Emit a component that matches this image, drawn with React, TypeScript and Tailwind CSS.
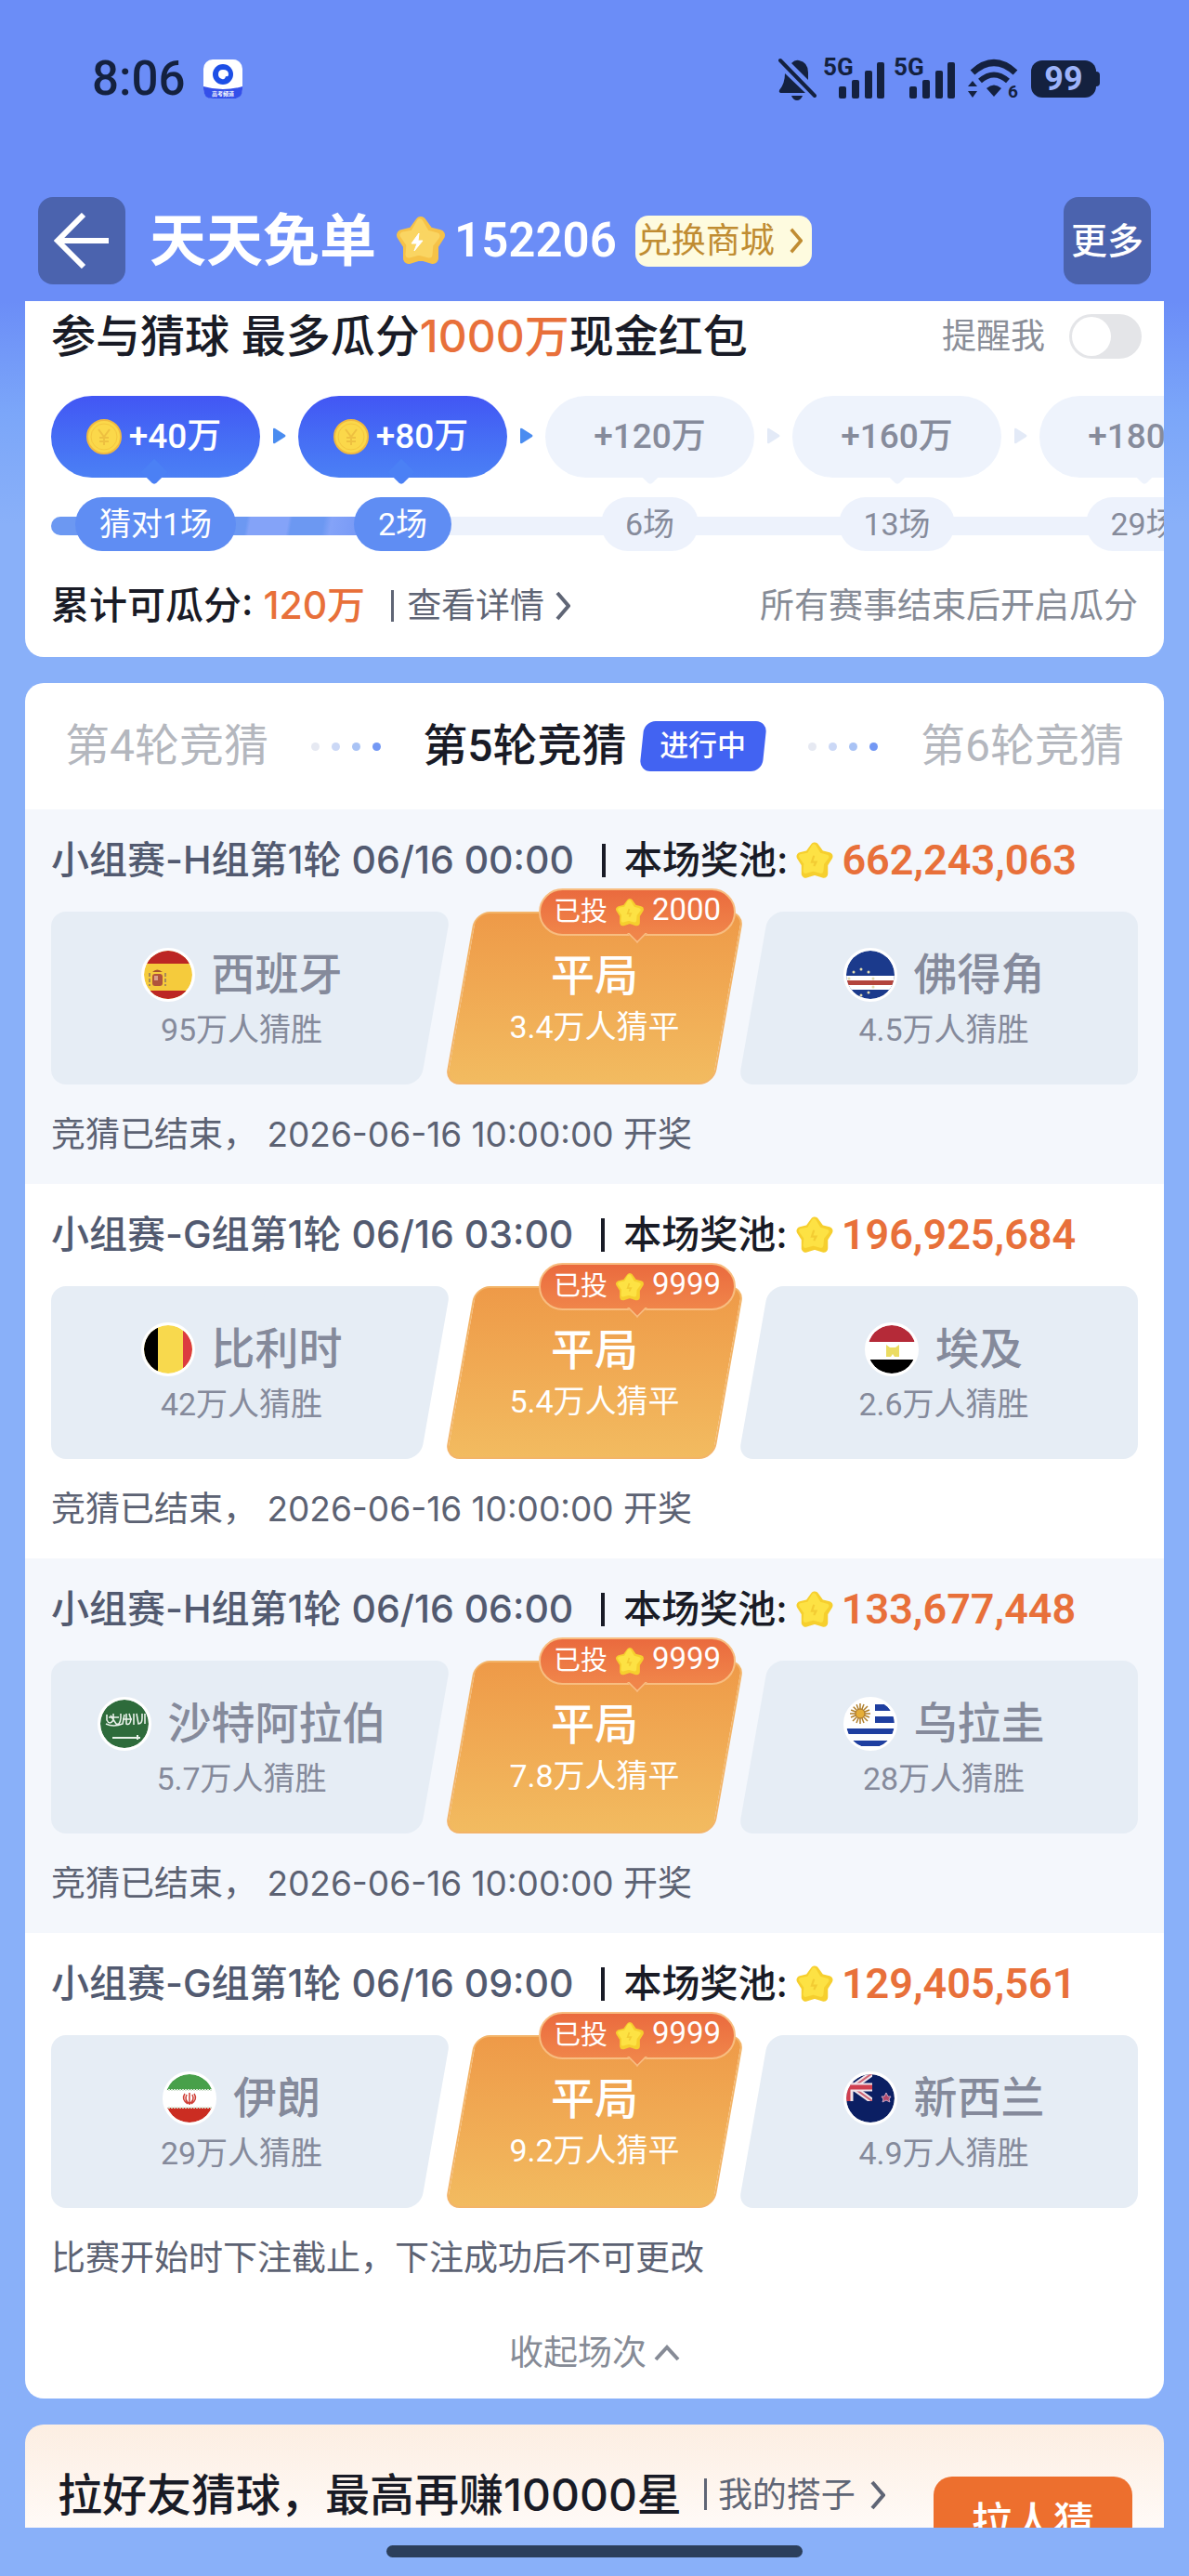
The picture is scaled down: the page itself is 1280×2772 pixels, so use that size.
import React from "react";

type Team = { name: string; votes: string; flag: React.ReactNode };

type Match = {
  title: string;
  pool: string;
  home: Team;
  away: Team;
  drawVotes: string;
  bet: string;
  note: string;
};

function Chevron({ className }: { className?: string }) {
  return (
    <svg viewBox="0 0 16 32" className={className} fill="none" stroke="currentColor" strokeWidth="4">
      <path d="M2 2 L14 16 L2 30" />
    </svg>
  );
}

function Star({ className, bolt }: { className?: string; bolt?: boolean }) {
  return (
    <svg viewBox="0 0 56 56" className={className}>
      <path
        d="M28 8 L36 19 L48 22 L41 33 L41 47 L28 43 L15 47 L15 33 L8 22 L20 19 Z"
        fill={bolt ? "#f6c247" : "#f6cf2e"}
        stroke={bolt ? "#f6c247" : "#f6cf2e"}
        strokeWidth="12"
        strokeLinejoin="round"
      />
      <path
        d="M27 8 L34 20 L45 23 L38 32 L37 43 L26 40 L15 43 L16 32 L9 22 L20 20 Z"
        fill={bolt ? "#fad562" : "#fde244"}
        stroke={bolt ? "#fad562" : "#fde244"}
        strokeWidth="7"
        strokeLinejoin="round"
      />
      {bolt ? (
        <path d="M26 20 L18 31 L24 31 L21 39 L30 28 L25 28 Z" fill="#fff" stroke="#fff" strokeLinejoin="round" />
      ) : (
        <path d="M27 21 L24 30 L30 30 L27 36" fill="none" stroke="#f3cc33" strokeWidth="3" />
      )}
    </svg>
  );
}

function Coin() {
  return (
    <svg viewBox="0 0 38 38" className="size-[38px]">
      <circle cx="19" cy="19" r="18" fill="#fbd84a" stroke="#f0b840" strokeWidth="2" />
      <circle cx="19" cy="19" r="14" fill="none" stroke="#f4c73f" />
      <path d="M13 11 L19 19 L25 11 M19 19 V28 M14 20 H24 M14 24 H24" fill="none" stroke="#eec040" strokeWidth="2" />
    </svg>
  );
}

function Flag({ children }: { children: React.ReactNode }) {
  return (
    <span className="size-[58px] shrink-0 overflow-hidden rounded-full border-[3px] border-white bg-white">
      <svg viewBox="0 0 52 52" className="size-full rounded-full">
        {children}
      </svg>
    </span>
  );
}

const spain = (
  <>
    <rect width="52" height="52" fill="#f5cb3c" />
    <rect width="52" height="14" fill="#bc2724" />
    <rect y="43" width="52" height="9" fill="#bc2724" />
    <rect x="9" y="25" width="11" height="13" rx="3" fill="#b0543c" />
    <rect x="11" y="27" width="4" height="5" fill="#d9a08a" />
    <path d="M9 23 Q14 18 20 23 Z" fill="#a5522f" />
    <path d="M6 24 V38 M23 24 V38" stroke="#a98a5a" strokeWidth="2" strokeDasharray="4 2" />
  </>
);

const capeVerde = (
  <>
    <rect width="52" height="52" fill="#1b3a8c" />
    <rect y="27" width="52" height="15" fill="#fff" />
    <rect y="32" width="52" height="5" fill="#b3443c" />
    <g fill="#e3dcae">
      <circle cx="8" cy="23" r="1.5" />
      <circle cx="16" cy="20" r="1.5" />
      <circle cx="24" cy="23" r="1.5" />
      <circle cx="3" cy="30" r="1.5" />
      <circle cx="29" cy="30" r="1.5" />
      <circle cx="29" cy="39" r="1.5" />
      <circle cx="24" cy="45" r="1.5" />
      <circle cx="16" cy="48" r="1.5" />
    </g>
  </>
);

const belgium = (
  <>
    <rect width="52" height="52" fill="#f8d94d" />
    <rect width="15" height="52" fill="#000" />
    <rect x="42" width="10" height="52" fill="#dc3b40" />
  </>
);

const egypt = (
  <>
    <rect width="52" height="52" fill="#fff" />
    <rect width="52" height="18" fill="#b52a38" />
    <rect y="37" width="52" height="15" fill="#000" />
    <path d="M20 21 L24 24 H30 L34 21 V34 H29 L27 31 L25 34 H20 Z" fill="#ebdc62" />
  </>
);

const saudi = (
  <>
    <rect width="52" height="52" fill="#2e6b3b" />
    <g fill="none" stroke="#e9f1ea" strokeWidth="1.6">
      <path d="M7 16 V22 Q10 28 14 22 V15 M11 17 L17 26 Q21 28 22 20 V15 M6 26 Q14 30 24 26 L26 16" />
      <path d="M28 15 V26 Q32 28 33 21 L31 15 M36 15 V27 M39 15 L41 26 Q45 26 45 20 V15 M48 15 V26 M9 19 H20 M24 21 H34" />
      <path d="M13 41 H43 M40 38 V43" strokeWidth="2" />
    </g>
  </>
);

const uruguay = (
  <>
    <rect width="52" height="52" fill="#fff" />
    <path d="M31 5 H52 V12 H31 Z M31 18 H52 V25 H31 Z M0 31 H52 V37 H0 Z M0 44 H52 V50 H0 Z" fill="#1f3fa0" />
    <path
      d="M15 4 V26 M4 15 H26 M7 7 L23 23 M23 7 L7 23 M11 5 L19 25 M19 5 L11 25 M5 11 L25 19 M5 19 L25 11"
      stroke="#b07f2a"
      strokeWidth="1.5"
    />
    <circle cx="15" cy="15" r="5" fill="#e5ae38" stroke="#a8742a" />
  </>
);

const iran = (
  <>
    <rect width="52" height="52" fill="#fff" />
    <rect width="52" height="17" fill="#48a04a" />
    <rect y="36" width="52" height="16" fill="#cb2d22" />
    <path d="M0 17 H52 M0 36 H52" stroke="#d8e6d5" strokeWidth="2" strokeDasharray="2 1" />
    <path
      d="M26 20 V33 M21 21 Q17 27 24 32 M31 21 Q35 27 28 32 M23 22 Q20 28 26 32 M29 22 Q32 28 26 32"
      fill="none"
      stroke="#cf4038"
      strokeWidth="1.5"
    />
  </>
);

const newZealand = (
  <>
    <rect width="52" height="52" fill="#0b1f63" />
    <svg width="28" height="29" viewBox="0 0 28 29">
      <path d="M-14 -1 L28 29 M28 -1 L-14 29" stroke="#f0e4ea" strokeWidth="6" />
      <path d="M-14 -1 L28 29 M28 -1 L-14 29" stroke="#cf6474" strokeWidth="2" />
      <path d="M3 0 V29 M0 14 H28" stroke="#f0e4ea" strokeWidth="9" />
      <path d="M2 0 V29 M0 14 H28" stroke="#cf3f50" strokeWidth="5" />
    </svg>
    <path d="M43 20 L45 24 L48 24 L46 27 L47 30 L43 28 L39 30 L40 27 L38 24 L41 24 Z" fill="#b5486a" stroke="#c9a6c4" />
  </>
);

const ended = "竞猜已结束， 2026-06-16 10:00:00 开奖";

const matches: Match[] = [
  {
    title: "小组赛-H组第1轮 06/16 00:00",
    pool: "662,243,063",
    home: { name: "西班牙", votes: "95万人猜胜", flag: spain },
    away: { name: "佛得角", votes: "4.5万人猜胜", flag: capeVerde },
    drawVotes: "3.4万人猜平",
    bet: "2000",
    note: ended,
  },
  {
    title: "小组赛-G组第1轮 06/16 03:00",
    pool: "196,925,684",
    home: { name: "比利时", votes: "42万人猜胜", flag: belgium },
    away: { name: "埃及", votes: "2.6万人猜胜", flag: egypt },
    drawVotes: "5.4万人猜平",
    bet: "9999",
    note: ended,
  },
  {
    title: "小组赛-H组第1轮 06/16 06:00",
    pool: "133,677,448",
    home: { name: "沙特阿拉伯", votes: "5.7万人猜胜", flag: saudi },
    away: { name: "乌拉圭", votes: "28万人猜胜", flag: uruguay },
    drawVotes: "7.8万人猜平",
    bet: "9999",
    note: ended,
  },
  {
    title: "小组赛-G组第1轮 06/16 09:00",
    pool: "129,405,561",
    home: { name: "伊朗", votes: "29万人猜胜", flag: iran },
    away: { name: "新西兰", votes: "4.9万人猜胜", flag: newZealand },
    drawVotes: "9.2万人猜平",
    bet: "9999",
    note: "比赛开始时下注截止，下注成功后不可更改",
  },
];

const steps = [
  { reward: "+40万", label: "猜对1场", done: true },
  { reward: "+80万", label: "2场", done: true },
  { reward: "+120万", label: "6场", done: false },
  { reward: "+160万", label: "13场", done: false },
  { reward: "+180万", label: "29场", done: false },
];

function Signal() {
  return (
    <svg viewBox="0 -8 66 62" className="h-[62px] w-[66px]" fill="#14213f">
      <text x="0" y="19" fontFamily="Roboto, sans-serif" fontSize="26" fontWeight="700">
        5G
      </text>
      <rect x="17" y="31" width="8" height="13" rx="2" />
      <rect x="31" y="24" width="8" height="20" rx="2" />
      <rect x="45" y="14" width="8" height="30" rx="2" />
      <rect x="58" y="5" width="8" height="39" rx="2" />
    </svg>
  );
}

function StatusBar() {
  return (
    <div className="flex h-[170px] items-center pr-24 pl-[99px]">
      <span className="font-['Roboto',sans-serif] text-[51px] font-medium text-[#14213f]">8:06</span>
      <svg viewBox="0 0 42 42" className="ml-5 size-[42px]">
        <rect width="42" height="42" rx="10" fill="#fff" />
        <path d="M0 29 Q21 35 42 29 V32 Q42 42 32 42 H10 Q0 42 0 32 Z" fill="#3450ea" />
        <circle cx="21" cy="16" r="11" fill="#1d4fe6" />
        <path d="M16 16 Q16 11 21 11 Q27 11 27 16 Q27 19 24 18 Q23 22 20 21 Q16 20 16 16 Z" fill="#fff" />
        <text x="21" y="39" textAnchor="middle" fontFamily="Noto Sans CJK SC, sans-serif" fontSize="6" fontWeight="700" fill="#fff">
          高考频道
        </text>
      </svg>
      <div className="ml-auto flex items-center">
        <svg viewBox="0 0 42 46" className="h-[46px] w-[42px]" fill="#14213f">
          <path d="M14 6 Q18 2 22 3 Q32 5 32 16 V24 Z" />
          <path d="M7 17 L29 38 H2 Q0 37 1 35 Q7 28 7 17 Z" />
          <path d="M14 41 H26 Q24 46 20 46 Q16 46 14 41 Z" />
          <path d="M2 3 L39 41" stroke="#14213f" strokeWidth="4" strokeLinecap="round" />
        </svg>
        <span className="ml-[6px]">
          <Signal />
        </span>
        <span className="ml-[10px]">
          <Signal />
        </span>
        <svg viewBox="0 -7 56 56" className="ml-[14px] size-14" fill="#14213f">
          <path d="M5 14 Q28 -7 51 14" fill="none" stroke="#14213f" strokeWidth="7" />
          <path d="M13 23 Q28 10 43 23" fill="none" stroke="#14213f" strokeWidth="6" />
          <path d="M20 31 Q28 24 36 31 L28 40 Z" />
          <path d="M0 29 L5 23 L10 29 Z M0 34 L5 41 L10 34 Z" />
          <text x="43" y="41" fontFamily="Roboto, sans-serif" fontSize="19" fontWeight="700">
            6
          </text>
        </svg>
        <span className="ml-3 flex h-10 w-[70px] items-center justify-center rounded-xl bg-[#14213f] font-['Roboto',sans-serif] text-[36px] font-bold text-[#9db3fa]">
          99
        </span>
        <span className="h-4 w-1 rounded-r bg-[#14213f]" />
      </div>
    </div>
  );
}

function NavBar() {
  return (
    <div className="flex items-center pt-[42px] pr-[41px] pb-[18px] pl-[41px]">
      <button type="button" aria-label="返回" className="flex size-[94px] items-center justify-center rounded-2xl bg-[#4b63ae]">
        <svg viewBox="0 0 60 60" className="size-[60px]" fill="none" stroke="#fff" strokeWidth="6">
          <path d="M32 2 L4 30 L32 58 M4 30 H59" />
        </svg>
      </button>
      <h1 className="ml-[26px] text-[61px] leading-[94px] font-bold text-white">天天免单</h1>
      <Star bolt className="ml-5 size-[56px]" />
      <span className="ml-2 font-['Roboto',sans-serif] text-[51px] font-semibold text-white">152206</span>
      <a
        href="#mall"
        className="ml-5 flex h-[55px] items-center gap-4 rounded-[14px] bg-[#fefbdf] pr-[10px] pl-[2px] text-[37px] text-[#c08c32]"
      >
        兑换商城
        <Chevron className="h-7 w-[14px]" />
      </a>
      <button type="button" className="ml-auto size-[94px] rounded-2xl bg-[#4b63ae] text-[39px] font-medium text-white">
        更多
      </button>
    </div>
  );
}

function RewardCard() {
  return (
    <section className="mx-[27px] overflow-hidden rounded-b-[20px] bg-white px-7 pt-2 pb-[25px]">
      <div className="flex h-[60px] items-center justify-between">
        <h2 className="text-[48px] font-medium text-[#191b26]">
          参与猜球 最多瓜分<span className="text-[#e8703a]">1000万</span>现金红包
        </h2>
        <label className="-mr-1 flex items-center gap-[26px] text-[37px] text-[#8a8e98]">
          提醒我
          <input
            type="checkbox"
            role="switch"
            className="h-12 w-[78px] appearance-none rounded-full bg-[#e4e5e8] p-[3px] before:block before:size-[42px] before:rounded-full before:bg-white"
          />
        </label>
      </div>

      <ol className="relative mt-[34px] flex gap-[41px]">
        <li
          aria-hidden="true"
          className="absolute top-[130px] left-0 h-5 w-[1300px] rounded-l-full bg-[#edf2fc]"
        />
        <li
          aria-hidden="true"
          className="absolute top-[130px] left-0 h-5 w-[379px] rounded-l-full bg-[linear-gradient(100deg,#6c98f2_208px,#84a3f8_212px,#84a3f8_252px,#6c98f2_256px,#6c98f2_290px,#84a3f8_298px,#7799f6_330px)]"
        />
        {steps.map((step, i) => (
          <li key={step.label} className="relative flex w-[225px] shrink-0 flex-col items-center">
            <div
              className={
                step.done
                  ? "relative flex h-[88px] w-full items-center justify-center gap-2 rounded-full bg-linear-to-b from-[#4256f4] to-[#4b80f5] pr-1 font-['Roboto','Noto_Sans_CJK_SC',sans-serif] text-[37px] font-medium text-white after:absolute after:-bottom-1 after:size-5 after:rotate-45 after:rounded-br after:bg-[#4b80f5]"
                  : "relative flex h-[88px] w-full items-center justify-center rounded-full bg-[#eef3fc] font-['Roboto','Noto_Sans_CJK_SC',sans-serif] text-[37px] font-medium text-[#868b9b] after:absolute after:-bottom-1 after:size-5 after:rotate-45 after:rounded-br after:bg-[#eef3fc]"
              }
            >
              {step.done && <Coin />}
              {step.reward}
            </div>
            <div
              className={
                step.done
                  ? "mt-[21px] flex h-[58px] items-center rounded-full bg-[#5f8df3] px-[26px] font-['Roboto','Noto_Sans_CJK_SC',sans-serif] text-[34px] text-white"
                  : "mt-[21px] flex h-[58px] items-center rounded-full bg-[#edf2fc] px-[26px] font-['Roboto','Noto_Sans_CJK_SC',sans-serif] text-[34px] text-[#868b9b]"
              }
            >
              {step.label}
            </div>
            {i < steps.length - 1 && (
              <svg
                viewBox="0 0 14 18"
                className="absolute top-[34px] -right-[28px] h-[18px] w-[14px]"
                fill={step.done ? "#4a8cf0" : "#e3eaf7"}
              >
                <path d="M0 2 Q0 0 2 1 L13 8 Q14 9 13 10 L2 17 Q0 18 0 16 Z" />
              </svg>
            )}
          </li>
        ))}
      </ol>

      <div className="mt-[29px] flex h-[60px] items-center">
        <p className="text-[41px] font-medium text-[#191b26]">
          累计可瓜分: <span className="text-[#e8703a]">120万</span>
        </p>
        <span className="ml-7 h-[34px] w-[3px] bg-[#5f6575]" />
        <a href="#detail" className="ml-[14px] flex items-center gap-3 text-[37px] text-[#5f6575]">
          查看详情
          <Chevron className="h-8 w-4" />
        </a>
        <p className="ml-auto text-[37px] text-[#868b96]">所有赛事结束后开启瓜分</p>
      </div>
    </section>
  );
}

function Dots() {
  return (
    <span className="flex gap-[13px]">
      <i className="size-[9px] rounded-full bg-[#e6e9f2]" />
      <i className="size-[9px] rounded-full bg-[#cbd8f6]" />
      <i className="size-[9px] rounded-full bg-[#a9c3f5]" />
      <i className="size-[9px] rounded-full bg-[#7398f4]" />
    </span>
  );
}

function TeamName({ team }: { team: Team }) {
  return (
    <>
      <span className="relative flex items-center gap-[18px] text-[47px] leading-[60px] font-medium text-[#858a9b]">
        <Flag>{team.flag}</Flag>
        {team.name}
      </span>
      <span className="relative mt-1 text-[34px] leading-[50px] text-[#858a9b]">{team.votes}</span>
    </>
  );
}

function MatchRow({ match }: { match: Match }) {
  return (
    <article className="px-7 pt-7 pb-[27px] odd:bg-[#f4f7fc]">
      <div className="flex h-[54px] items-center text-[41px] font-medium text-[#525a70]">
        <h3>{match.title}</h3>
        <span className="ml-[30px] h-9 w-1 bg-[#191b26]" />
        <span className="ml-5 text-[#191b26]">本场奖池:</span>
        <Star className="ml-2 size-[42px]" />
        <span className="ml-2 font-['Roboto',sans-serif] text-[45px] font-semibold text-[#e8703a]">{match.pool}</span>
      </div>

      <div className="mt-7 grid h-[186px] grid-cols-[1fr_310px_1fr] font-['Roboto','Noto_Sans_CJK_SC',sans-serif]">
        <button
          type="button"
          className="relative flex flex-col items-center pt-[38px] pr-5 before:absolute before:inset-y-0 before:right-20 before:left-0 before:rounded-l-2xl before:bg-[#e6edf5] after:absolute after:inset-y-0 after:right-4 after:left-1/2 after:-skew-x-10 after:rounded-r-2xl after:bg-[#e6edf5] *:z-10"
        >
          <TeamName team={match.home} />
        </button>
        <button
          type="button"
          className="relative -mx-[6px] flex flex-col items-center pt-[39px] text-white before:absolute before:inset-x-4 before:inset-y-0 before:-skew-x-10 before:rounded-2xl before:border-2 before:border-[#f3b468] before:bg-linear-to-b before:from-[#ee9a48] before:to-[#f2bb60]"
        >
          <span className="relative text-[47px] leading-[60px] font-medium">平局</span>
          <span className="relative text-[34px] leading-[50px]">{match.drawVotes}</span>
          <span className="absolute -top-[25px] left-[101px] flex h-[51px] w-[212px] items-center justify-center gap-2 rounded-full border-2 border-[#f8bd80] bg-linear-to-b from-[#ea6a3e] to-[#f0854a] text-[29px] after:absolute after:-bottom-[7px] after:size-4 after:rotate-45 after:border-r-2 after:border-b-2 after:border-[#f8bd80] after:bg-[#f0854a] after:[clip-path:polygon(100%_0,100%_100%,0_100%)]">
            已投
            <Star className="size-8" />
            <b className="pb-[6px] text-[33px] font-normal">{match.bet}</b>
          </span>
        </button>
        <button
          type="button"
          className="relative flex flex-col items-center pt-[38px] pl-3 before:absolute before:inset-y-0 before:right-0 before:left-20 before:rounded-r-2xl before:bg-[#e6edf5] after:absolute after:inset-y-0 after:right-1/2 after:left-4 after:-skew-x-10 after:rounded-l-2xl after:bg-[#e6edf5] *:z-10"
        >
          <TeamName team={match.away} />
        </button>
      </div>

      <p className="mt-7 text-[37px] leading-[52px] text-[#5c6273]">{match.note}</p>
    </article>
  );
}

function RoundsCard() {
  return (
    <section className="mx-[27px] mt-7 overflow-hidden rounded-[20px] bg-white">
      <nav className="flex h-[136px] items-center justify-between px-[43px] font-['Roboto','Noto_Sans_CJK_SC',sans-serif] text-[48px] text-[#b4b7be]">
        <button type="button">第4轮竞猜</button>
        <Dots />
        <span className="flex items-center gap-[14px]">
          <button type="button" aria-current="true" className="font-medium text-[#191b26]">
            第5轮竞猜
          </button>
          <span className="relative flex h-[54px] w-[136px] items-center justify-center text-[31px] font-medium text-white before:absolute before:inset-x-[2px] before:inset-y-0 before:-skew-x-6 before:rounded-xl before:bg-[#4263f2]">
            <span className="relative">进行中</span>
          </span>
        </span>
        <Dots />
        <button type="button">第6轮竞猜</button>
      </nav>
      <div>
        {matches.map((match) => (
          <MatchRow key={match.title} match={match} />
        ))}
      </div>
      <button type="button" className="flex h-[98px] w-full items-center justify-center gap-2 text-[37px] text-[#868b96]">
        收起场次
        <svg viewBox="0 0 28 18" className="h-[18px] w-7" fill="none" stroke="currentColor" strokeWidth="4">
          <path d="M2 16 L14 3 L26 16" />
        </svg>
      </button>
    </section>
  );
}

function InviteCard() {
  return (
    <section className="mx-[27px] mt-7 flex h-[111px] items-start overflow-hidden rounded-t-[20px] bg-linear-to-b from-[#fceee2] to-[#fffaf7] pr-[34px] pl-[35px]">
      <h2 className="mt-[46px] text-[48px] leading-[60px] font-medium text-[#191b26]">
        拉好友猜球，最高再赚10000星
      </h2>
      <span className="mt-[58px] ml-6 h-[34px] w-[3px] bg-[#5f6575]" />
      <a href="#partners" className="mt-[46px] ml-3 flex items-center gap-4 text-[37px] leading-[60px] text-[#5f6575]">
        我的搭子
        <Chevron className="h-8 w-4" />
      </a>
      <button
        type="button"
        className="mt-14 ml-auto h-[98px] w-[214px] shrink-0 rounded-[20px] bg-[#ed6f2e] text-[44px] font-medium text-white"
      >
        拉人猜
      </button>
    </section>
  );
}

function App() {
  return (
    <div className="min-h-screen bg-[#89b0f9] font-['Inter','Noto_Sans_CJK_SC',sans-serif] whitespace-nowrap">
      <header className="bg-[#6b8df7]">
        <StatusBar />
        <NavBar />
      </header>
      <main className="bg-[linear-gradient(#6b8df7,#7ba6f9_120px,#89b0f9_240px)]">
        <RewardCard />
        <RoundsCard />
        <InviteCard />
      </main>
      <footer className="flex h-[52px] justify-center pt-[19px]">
        <span className="h-[13px] w-[448px] rounded-full bg-[#2c3f5c]" />
      </footer>
    </div>
  );
}

export default App;
